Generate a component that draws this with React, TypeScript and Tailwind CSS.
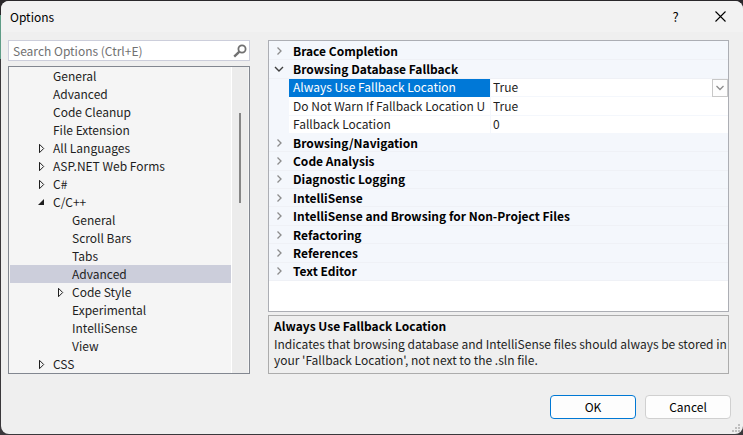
import type { ReactNode } from "react";

type TreeItem = { label: string; level: 1 | 2; state?: "open" | "closed"; selected?: boolean };

const treeItems: TreeItem[] = [
  { label: "General", level: 1 },
  { label: "Advanced", level: 1 },
  { label: "Code Cleanup", level: 1 },
  { label: "File Extension", level: 1 },
  { label: "All Languages", level: 1, state: "closed" },
  { label: "ASP.NET Web Forms", level: 1, state: "closed" },
  { label: "C#", level: 1, state: "closed" },
  { label: "C/C++", level: 1, state: "open" },
  { label: "General", level: 2 },
  { label: "Scroll Bars", level: 2 },
  { label: "Tabs", level: 2 },
  { label: "Advanced", level: 2, selected: true },
  { label: "Code Style", level: 2, state: "closed" },
  { label: "Experimental", level: 2 },
  { label: "IntelliSense", level: 2 },
  { label: "View", level: 2 },
  { label: "CSS", level: 1, state: "closed" },
];

const closedCategories = [
  "Browsing/Navigation",
  "Code Analysis",
  "Diagnostic Logging",
  "IntelliSense",
  "IntelliSense and Browsing for Non-Project Files",
  "Refactoring",
  "References",
  "Text Editor",
];

function Expander({ state }: { state?: "open" | "closed" }) {
  return (
    <svg className="h-[10px] w-[15px] shrink-0" viewBox="0 0 15 10" aria-hidden="true">
      {state === "closed" && (
        <path d="M1.5 1.3V9.7L5.7 5.5Z" fill="none" stroke="#1e1e1e" strokeWidth="1" />
      )}
      {state === "open" && <path d="M6 2V8H0Z" fill="#1e1e1e" />}
    </svg>
  );
}

function TreeRow({ item }: { item: TreeItem }) {
  return (
    <li role="treeitem" aria-selected={!!item.selected}>
      <button
        type="button"
        className={`flex h-[18px] w-full items-center text-left leading-4 whitespace-nowrap ${
          item.level === 1 ? "pl-[28px]" : "pl-[47px]"
        } ${item.selected ? "bg-[#cccedb]" : ""}`}
      >
        <Expander state={item.state} />
        {item.label}
      </button>
    </li>
  );
}

function Chevron({ open }: { open?: boolean }) {
  return (
    <svg className="h-[10px] w-[10px]" viewBox="0 0 10 10" fill="none" aria-hidden="true">
      {open ? (
        <path d="M1 3L5 7L9 3" stroke="#404040" strokeWidth="1.4" />
      ) : (
        <path d="M3.5 1.5L7 5L3.5 8.5" stroke="#8c8c8c" strokeWidth="1.3" />
      )}
    </svg>
  );
}

function Category({ label, open }: { label: string; open?: boolean }) {
  return (
    <button
      type="button"
      aria-expanded={!!open}
      className="flex items-center border-b border-[#eff1f6] bg-[#f4f7fc] text-left font-bold whitespace-nowrap text-black"
    >
      <span className="flex w-5 shrink-0 justify-center">
        <Chevron open={open} />
      </span>
      <span className="pl-1">{label}</span>
    </button>
  );
}

function Property({ label, id, selected, children }: { label: string; id: string; selected?: boolean; children: ReactNode }) {
  return (
    <div className="flex bg-[#f4f7fc] pl-5">
      <label
        htmlFor={id}
        className={`flex w-[201px] shrink-0 items-center overflow-hidden border-b pl-1 whitespace-nowrap ${
          selected ? "border-[#0078d7] bg-[#0078d7] text-white" : "border-[#f4f7fc] bg-white"
        }`}
      >
        {label}
      </label>
      <div className="relative ml-px flex min-w-0 flex-1 items-stretch border-b border-[#f4f7fc] bg-white">{children}</div>
    </div>
  );
}

export default function App() {
  return (
    <div className="flex h-screen flex-col bg-[#2a282b] bg-[linear-gradient(#2a282b_15px,#5f9c86_15px,#5f9c86_59px,#3a383b_59px)] py-px pl-px font-['Noto_Sans_CJK_KR',sans-serif] text-xs leading-4 text-[#1e1e1e]">
      <div role="dialog" aria-label="Options" className="relative flex min-h-0 flex-1 flex-col overflow-hidden rounded-lg bg-[#efefef]">
        <header className="flex h-[31px] shrink-0 items-center bg-[#f2f2f2] pl-[9px] text-black">
          <h1 className="flex-1">Options</h1>
          <button type="button" aria-label="Help" className="h-full w-[45px] text-[13px] leading-4">
            ?
          </button>
          <button type="button" aria-label="Close" className="flex h-full w-[45px] items-center justify-center">
            <svg className="h-[11px] w-[11px]" viewBox="0 0 11 11" aria-hidden="true">
              <path d="M0.5 0.5L10.5 10.5M10.5 0.5L0.5 10.5" stroke="#000" strokeWidth="1.1" />
            </svg>
          </button>
        </header>

        <main className="flex min-h-0 flex-1 gap-[18px] pt-2 pr-[14px] pl-[7px]">
          <div className="flex w-[242px] shrink-0 flex-col gap-[5px]">
            <div className="flex h-[21px] shrink-0 items-center border border-[#cccedb] bg-white pr-[2px] pl-1">
              <input
                type="text"
                aria-label="Search Options"
                placeholder="Search Options (Ctrl+E)"
                className="h-4 min-w-0 flex-1 bg-transparent outline-none placeholder:text-[#717171]"
              />
              <button type="button" aria-label="Search">
                <svg className="h-[14px] w-[14px]" viewBox="0 0 14 14" fill="none" stroke="#717171" aria-hidden="true">
                  <circle cx="9" cy="5" r="3.6" strokeWidth="1.8" />
                  <path d="M6.4 7.6L1.2 12.6" strokeWidth="2.4" />
                </svg>
              </button>
            </div>
            <div className="flex min-h-0 flex-1 border border-[#828790] bg-[#f5f5f5] px-px">
              <ul role="tree" className="min-w-0 flex-1 overflow-hidden">
                {treeItems.map((item, i) => (
                  <TreeRow key={i} item={item} />
                ))}
              </ul>
              <div className="flex w-[17px] justify-center border-l border-white bg-[#ececec] pt-[46px]">
                <div className="h-[90px] w-[2px] bg-[#868686]" />
              </div>
            </div>
          </div>

          <div className="flex min-w-0 flex-1 flex-col gap-[3px]">
            <section className="min-h-0 flex-1 overflow-hidden border border-[#acaeb4] bg-white">
              <div className="grid h-[240px] auto-rows-fr bg-[#f4f7fc] pt-px">
                <Category label="Brace Completion" />
                <Category label="Browsing Database Fallback" open />
                <Property label="Always Use Fallback Location" id="always" selected>
                  <select id="always" className="w-full appearance-none bg-transparent pl-[2px] outline-none">
                    <option>True</option>
                    <option>False</option>
                  </select>
                  <span className="pointer-events-none absolute top-0 right-0 flex h-[18px] w-4 items-center justify-center border border-[#c8c8c8] bg-[#fdfdfd]">
                    <svg className="h-[10px] w-[10px]" viewBox="0 0 10 10" fill="none" aria-hidden="true">
                      <path d="M1.5 3L5 6.5L8.5 3" stroke="#8c8c8c" strokeWidth="1.3" />
                    </svg>
                  </span>
                </Property>
                <Property label="Do Not Warn If Fallback Location U" id="warn">
                  <input id="warn" type="text" defaultValue="True" className="w-full pl-[2px] outline-none" />
                </Property>
                <Property label="Fallback Location" id="location">
                  <input id="location" type="text" defaultValue="0" className="w-full pl-[2px] outline-none" />
                </Property>
                {closedCategories.map((label) => (
                  <Category key={label} label={label} />
                ))}
              </div>
            </section>
            <section className="h-[59px] shrink-0 border border-[#acacac] pt-[2px] pl-[5px]">
              <h2 className="mb-[2px] font-bold text-black">Always Use Fallback Location</h2>
              <p>
                Indicates that browsing database and IntelliSense files should always be stored in your 'Fallback
                Location', not next to the .sln file.
              </p>
            </section>
          </div>
        </main>

        <footer className="flex shrink-0 justify-end gap-[9px] pt-[21px] pr-3 pb-[15px] text-black">
          <button type="button" className="h-6 w-[86px] rounded border border-[#0078d4] bg-[#fdfdfd]">
            OK
          </button>
          <button type="button" className="h-6 w-[86px] rounded border border-[#d0d0d0] bg-[#fdfdfd]">
            Cancel
          </button>
        </footer>
        <svg className="absolute right-[3px] bottom-[2px] h-2 w-2" viewBox="0 0 8 8" fill="#bfbfbf" aria-hidden="true">
          <path d="M6 0h2v2h-2zM3 3h2v2h-2zM6 3h2v2h-2zM0 6h2v2h-2zM3 6h2v2h-2zM6 6h2v2h-2z" />
        </svg>
      </div>
    </div>
  );
}
